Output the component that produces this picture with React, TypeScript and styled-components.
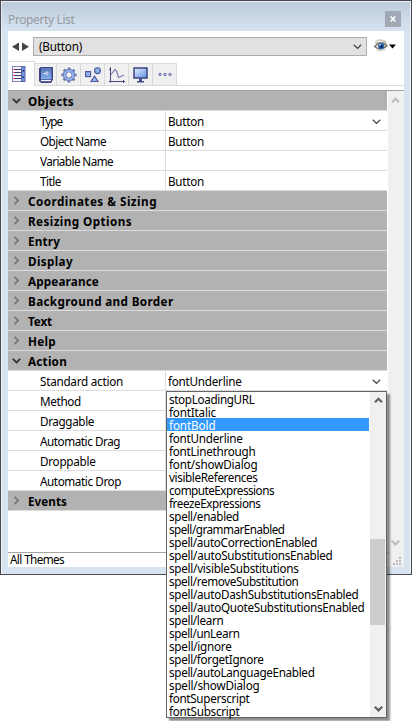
import React, { useLayoutEffect, useRef, useState } from 'react';
import styled, { createGlobalStyle } from 'styled-components';

const Global = createGlobalStyle`
  * { box-sizing: border-box; }
  body { margin: 0; background: #fff; overflow: hidden; }
`;

const Stage = styled.div`
  position: relative;
  width: 412px;
  height: 721px;
  font: 11.7px 'Noto Sans', 'Open Sans', sans-serif;
  color: #000;
`;

const Window = styled.div`
  width: 412px;
  height: 575px;
  border: 1px solid #4b4952;
  background: #d7e3f0;
  box-shadow: inset 1px 0 #eef3fa, inset -1px 0 #eef3fa;
  padding: 0 7px 7px 7px;
  display: flex;
  flex-direction: column;
`;

const TitleBar = styled.div`
  height: 30px;
  flex: none;
  margin: 0 -7px;
  padding: 8px 10px 0 7px;
  display: flex;
  justify-content: space-between;
  background: linear-gradient(#bccad9, #d7e3f0);
  box-shadow: inset 0 1px #e8eef6, inset 1px 0 #e8eef6, inset -1px 0 #e8eef6;
  color: #969ba2;
`;

const Title = styled.span`
  font-size: 12px;
  line-height: 22px;
`;

const CloseButton = styled.span`
  width: 16px;
  height: 16px;
  margin-top: 2px;
  background: #a0a9b4;
  display: flex;
  align-items: center;
  justify-content: center;
`;

const Content = styled.div`
  flex: 1;
  min-height: 0;
  background: #fff;
  display: flex;
  flex-direction: column;
`;

const Toolbar = styled.div`
  height: 30px;
  flex: none;
  display: flex;
  padding: 6px 0 0 3px;
`;

const Combo = styled.div`
  width: 334px;
  height: 19px;
  margin-left: 4px;
  border: 1px solid #adadad;
  background: #e1e1e1;
  display: flex;
  align-items: center;
  justify-content: space-between;
  padding: 0 4px 0 5px;
  line-height: 17px;
`;

const TabBar = styled.div`
  height: 25px;
  flex: none;
  display: flex;
  align-items: flex-end;
  box-shadow: inset 0 -1px #dadada;
`;

const Tab = styled.div<{ $w?: number; $active?: boolean }>`
  width: ${(p) => p.$w ?? 24}px;
  height: ${(p) => (p.$active ? 25 : 23)}px;
  background: ${(p) => (p.$active ? '#fff' : '#f0f0f0')};
  border: solid #dadada;
  border-width: 1px 1px ${(p) => (p.$active ? 0 : 1)}px 0;
  padding-right: ${(p) => (p.$active ? 4 : 0)}px;
  display: flex;
  align-items: center;
  justify-content: center;
  svg { flex: none; }
`;

const Body = styled.div`
  height: 462px;
  margin-top: 4px;
  flex: none;
  border-top: 1px solid #a0a0a0;
  display: flex;
`;

const List = styled.div`
  width: 379px;
`;

const Section = styled.div`
  height: 20px;
  background: #b2b2b2;
  border-bottom: 1px solid #dcdcdc;
  display: flex;
  align-items: center;
  padding-left: 4px;
  gap: 7px;
  font-weight: 700;
  line-height: 17px;

  span { padding-top: 2px; }
`;

const Row = styled.div`
  height: 20px;
  border-bottom: 1px solid #dcdcdc;
  display: flex;
  line-height: 21px;
`;

const Label = styled.div`
  width: 158px;
  padding-left: 32px;
  border-right: 1px solid #dcdcdc;
`;

const Value = styled.div`
  flex: 1;
  height: 19px;
  padding: 1px 6px 0 2px;
  display: flex;
  align-items: center;
  justify-content: space-between;
`;

const Text = styled.span`
  white-space: pre;
`;

/* Tracks a label so that it advances exactly `w` pixels. */
const Fit = ({ w, children }: { w: number; children: string }) => {
  const ref = useRef<HTMLSpanElement>(null);
  const [spacing, setSpacing] = useState(0);
  useLayoutEffect(() => {
    if (ref.current) {
      setSpacing((w - ref.current.getBoundingClientRect().width) / children.length);
    }
  }, [w, children]);
  return (
    <Text ref={ref} style={{ letterSpacing: `${spacing}px` }}>
      {children}
    </Text>
  );
};

const Gutter = styled.div`
  width: 16px;
  margin-left: 1px;
  height: 476px;
  background: #f0f0f0;
  display: flex;
  flex-direction: column;
  align-items: center;
  padding: 5px 1px 0 0;
`;

const Spacer = styled.div<{ $h: number }>`
  height: ${(p) => p.$h}px;
  flex: none;
`;

const Footer = styled.div`
  width: 380px;
  height: 15px;
  flex: none;
  border-top: 1px solid #a5a5a5;
  padding-left: 2px;
  line-height: 12px;
`;

const Menu = styled.div`
  position: absolute;
  left: 166px;
  top: 391px;
  width: 221px;
  height: 327px;
  border: 1px solid #646464;
  background: #fff;
  box-shadow: 3px 3px 2px rgba(0, 0, 0, 0.45);
  display: flex;
`;

const Items = styled.div`
  width: 202px;
`;

const Item = styled.div<{ $on?: boolean }>`
  height: 13px;
  line-height: 15px;
  padding-left: 2px;
  background: ${(p) => (p.$on ? '#3399ff' : 'transparent')};
  color: ${(p) => (p.$on ? '#fff' : '#000')};
`;

const MenuScroll = styled.div`
  margin-left: 1px;
  width: 16px;
  background: #f0f0f0;
  display: flex;
  flex-direction: column;
  align-items: center;
  padding-top: 4px;
`;

const Thumb = styled.div`
  width: 15px;
  height: 86px;
  flex: none;
  align-self: flex-start;
  background: #cdcdcd;
`;

const Glyph = styled.svg<{ $top?: number; $left?: number }>`
  flex: none;
  margin-top: ${(p) => p.$top ?? 0}px;
  margin-left: ${(p) => p.$left ?? 0}px;
`;

type Dir = 'up' | 'down' | 'right';
const chevrons: Record<Dir, string> = {
  up: 'M1 6.3 4.5 2.8 8 6.3',
  down: 'M.8 2.8 4.5 6.4 8.2 2.8',
  right: 'M2.6 .8 6.2 4.5 2.6 8.2',
};
const Chevron = ({ dir, color = '#444', w = 1.8 }: { dir: Dir; color?: string; w?: number }) => (
  <Glyph width="9" height="9" viewBox="0 0 9 9">
    <path d={chevrons[dir]} fill="none" stroke={color} strokeWidth={w} />
  </Glyph>
);

const NavArrows = () => (
  <Glyph width="18" height="10" viewBox="0 0 18 10" $top={5}>
    <path d="M8 .6V9L1 4.8ZM11 .6V9l7-4.2Z" fill="#444" />
  </Glyph>
);

const Eye = () => (
  <Glyph width="23" height="14" viewBox="0 0 23 14" $top={2} $left={7}>
    <path d="M1 3Q6-1 12 3" fill="none" stroke="#d0ccc4" strokeWidth="1.6" />
    <path d="M.5 7.500Q6 2 13 6.500 7 13 .5 7.500Z" fill="#e6e6e3" stroke="#777064" strokeWidth="1.200" />
    <path d="M1.500 4.800Q7 1.600 12.500 4.600" fill="none" stroke="#8b8477" />
    <path d="M2 11Q7 13.500 12 10.500" fill="none" stroke="#d4d0ca" />
    <circle cx="7.200" cy="7" r="3.100" fill="#2468b0" />
    <circle cx="7.400" cy="7.500" r="1.500" fill="#0b2456" />
    <circle cx="6.200" cy="5.800" r=".9" fill="#b7dcf5" />
    <path d="M15 5.500h7l-3.500 4Z" fill="#000" />
  </Glyph>
);

const IconList = () => (
  <svg width="14" height="16" viewBox="0 0 14 16">
    <rect x=".5" y=".5" width="9" height="15" fill="#f5f6fc" stroke="#8486ba" />
    <rect x="9.500" y=".5" width="3.500" height="15" fill="#6f9ae0" stroke="#6164a4" />
    <path d="M2 3.500h7.500M2 6.500h7.500M2 9.500h7.500M2 12.500h7.500" stroke="#3f4178" />
    <path d="M1.500 3.500H3M1.500 6.500H3M1.500 9.500H3M1.500 12.500H3" stroke="#d01030" />
    <path d="M10 5.500l1.300-2 1.200 2M10 10.500l1.300 2 1.200-2" fill="#1d2460" />
  </svg>
);

const IconBook = () => (
  <svg width="14" height="16" viewBox="0 0 14 16">
    <defs>
      <linearGradient id="book" x1="0" y1="0" x2="0" y2="1">
        <stop offset="0" stopColor="#5874b4" />
        <stop offset="1" stopColor="#80b0ee" />
      </linearGradient>
    </defs>
    <path d="M1.500.5h12v12l-1.500 3H2L.5 14V1.500Z" fill="#3c4288" stroke="#40437c" />
    <rect x="2" y="1" width="10.500" height="11" fill="url(#book)" />
    <path d="M2 13.500h10" stroke="#f4f6ff" strokeWidth="1.400" />
    <path d="M4.500 6.500h1.500" stroke="#eef" />
    <circle cx="7.800" cy="6.200" r="1.300" fill="none" stroke="#eef" />
  </svg>
);

const IconGear = () => (
  <svg width="16" height="16" viewBox="0 0 16 16">
    <circle cx="8" cy="8" r="6.600" fill="none" stroke="#6b70aa" strokeWidth="2" strokeDasharray="2.600 2.583" strokeDashoffset="1.300" />
    <circle cx="8" cy="8" r="4.300" fill="none" stroke="#6a72b0" strokeWidth="3.800" />
    <circle cx="8" cy="8" r="4.300" fill="none" stroke="#8fb2ea" strokeWidth="2.300" />
    <circle cx="8" cy="8" r="2.400" fill="#f0f0f0" />
  </svg>
);

const IconShapes = () => (
  <svg width="16" height="16" viewBox="0 0 16 16">
    <g fill="#8eb4ee" stroke="#50549a" strokeWidth="1.100">
      <rect x=".6" y="4.600" width="5" height="5" />
      <circle cx="12.500" cy="3.700" r="2.900" />
      <path d="M9.500 9 13 14.500H6Z" />
    </g>
  </svg>
);

const IconChart = () => (
  <svg width="16" height="16" viewBox="0 0 16 16">
    <path d="M1.500 0v15.500M0 14.500h16M0 2.500h2M14.500 13v3" stroke="#46497f" fill="none" />
    <path d="M2 7.500 6 2.500 7.500 4 9.500 10.500 15 8" stroke="#7a7db0" strokeWidth="1.200" fill="none" />
  </svg>
);

const IconMonitor = () => (
  <svg width="15" height="16" viewBox="0 0 15 16">
    <defs>
      <linearGradient id="screen" x1="0" y1="0" x2="1" y2="1">
        <stop offset="0" stopColor="#e4efff" />
        <stop offset="1" stopColor="#5f8fe0" />
      </linearGradient>
    </defs>
    <rect x="1" y="1" width="13" height="10" fill="url(#screen)" stroke="#3c407e" strokeWidth="1.500" />
    <path d="M6 11.500h3v2.500h2v1.500H4V14h2Z" fill="#44488a" />
  </svg>
);

const IconDots = () => (
  <svg width="14" height="5" viewBox="0 0 14 5">
    <g fill="#c4cbf0" stroke="#666aa6">
      <circle cx="2" cy="2.500" r="1.200" />
      <circle cx="7" cy="2.500" r="1.200" />
      <circle cx="12" cy="2.500" r="1.200" />
    </g>
  </svg>
);

const Grip = () => (
  <Glyph width="8" height="8" viewBox="0 0 8 8" $left={3}>
    <path d="M6 0h2v2H6zM6 3h2v2H6zM6 6h2v2H6zM3 3h2v2H3zM3 6h2v2H3zM0 6h2v2H0z" fill="#bcbcbc" />
  </Glyph>
);

type Entry =
  | { kind: 'section'; text: string; w: number; open?: boolean }
  | { kind: 'row'; text: string; w: number; value?: string; vw?: number; select?: boolean };

const entries: Entry[] = [
  { kind: 'section', text: 'Objects', w: 46, open: true },
  { kind: 'row', text: 'Type', w: 22, value: 'Button', vw: 36, select: true },
  { kind: 'row', text: 'Object Name', w: 66, value: 'Button', vw: 36 },
  { kind: 'row', text: 'Variable Name', w: 73 },
  { kind: 'row', text: 'Title', w: 21, value: 'Button', vw: 36 },
  { kind: 'section', text: 'Coordinates & Sizing', w: 129 },
  { kind: 'section', text: 'Resizing Options', w: 104 },
  { kind: 'section', text: 'Entry', w: 32 },
  { kind: 'section', text: 'Display', w: 45 },
  { kind: 'section', text: 'Appearance', w: 71 },
  { kind: 'section', text: 'Background and Border', w: 145.5 },
  { kind: 'section', text: 'Text', w: 24 },
  { kind: 'section', text: 'Help', w: 28 },
  { kind: 'section', text: 'Action', w: 39, open: true },
  { kind: 'row', text: 'Standard action', w: 83, value: 'fontUnderline', vw: 73.5, select: true },
  { kind: 'row', text: 'Method', w: 41 },
  { kind: 'row', text: 'Draggable', w: 54 },
  { kind: 'row', text: 'Automatic Drag', w: 80 },
  { kind: 'row', text: 'Droppable', w: 55.5 },
  { kind: 'row', text: 'Automatic Drop', w: 81 },
  { kind: 'section', text: 'Events', w: 39 },
];

const actions: [string, number][] = [
  ['stopLoadingURL', 85.5], ['fontItalic', 47], ['fontBold', 46.5], ['fontUnderline', 73.5],
  ['fontLinethrough', 86.5], ['font/showDialog', 88.5], ['visibleReferences', 88.5],
  ['computeExpressions', 105], ['freezeExpressions', 91.5], ['spell/enabled', 70],
  ['spell/grammarEnabled', 115.5], ['spell/autoCorrectionEnabled', 148],
  ['spell/autoSubstitutionsEnabled', 163.5], ['spell/visibleSubstitutions', 129.5],
  ['spell/removeSubstitution', 129.5], ['spell/autoDashSubstitutionsEnabled', 189.5],
  ['spell/autoQuoteSubstitutionsEnabled', 195.5], ['spell/learn', 54.5], ['spell/unLearn', 70.5],
  ['spell/ignore', 62.5], ['spell/forgetIgnore', 94.5], ['spell/autoLanguageEnabled', 145.5],
  ['spell/showDialog', 90.5], ['fontSuperscript', 80.5], ['fontSubscript', 70.5],
];

export default function App() {
  return (
    <Stage>
      <Global />
      <Window>
        <TitleBar>
          <Title><Fit w={66.5}>Property List</Fit></Title>
          <CloseButton>
            <svg width="6" height="6" viewBox="0 0 6 6">
              <path d="M.7.5 5.300 5.500M5.300.5.7 5.500" stroke="#fff" strokeWidth="1.600" />
            </svg>
          </CloseButton>
        </TitleBar>
        <Content>
          <Toolbar>
            <NavArrows />
            <Combo>
              <Fit w={43}>(Button)</Fit>
              <Chevron dir="down" w={1.3} />
            </Combo>
            <Eye />
          </Toolbar>
          <TabBar>
            <Tab $w={27} $active><IconList /></Tab>
            <Tab $w={22}><IconBook /></Tab>
            <Tab><IconGear /></Tab>
            <Tab><IconShapes /></Tab>
            <Tab><IconChart /></Tab>
            <Tab><IconMonitor /></Tab>
            <Tab><IconDots /></Tab>
          </TabBar>
          <Body>
            <List>
              {entries.map((e) =>
                e.kind === 'section' ? (
                  <Section key={e.text}>
                    <Chevron dir={e.open ? 'down' : 'right'} color={e.open ? '#333' : '#777'} />
                    <Fit w={e.w}>{e.text}</Fit>
                  </Section>
                ) : (
                  <Row key={e.text}>
                    <Label><Fit w={e.w}>{e.text}</Fit></Label>
                    <Value>
                      {e.value && <Fit w={e.vw ?? 0}>{e.value}</Fit>}
                      {e.select && <Chevron dir="down" w={1.3} />}
                    </Value>
                  </Row>
                ),
              )}
            </List>
            <Gutter>
              <Chevron dir="up" color="#bcbcbc" w={2.2} />
              <Spacer $h={433} />
              <Chevron dir="down" color="#bcbcbc" w={2.2} />
              <Spacer $h={10} />
              <Grip />
            </Gutter>
          </Body>
          <Footer><Fit w={54}>All Themes</Fit></Footer>
        </Content>
      </Window>
      <Menu>
        <Items>
          {actions.map(([text, w]) => (
            <Item key={text} $on={text === 'fontBold'}>
              <Fit w={w}>{text}</Fit>
            </Item>
          ))}
        </Items>
        <MenuScroll>
          <Chevron dir="up" color="#606060" w={2.2} />
          <Spacer $h={134} />
          <Thumb />
          <Spacer $h={79} />
          <Chevron dir="down" color="#606060" w={2.2} />
        </MenuScroll>
      </Menu>
    </Stage>
  );
}
